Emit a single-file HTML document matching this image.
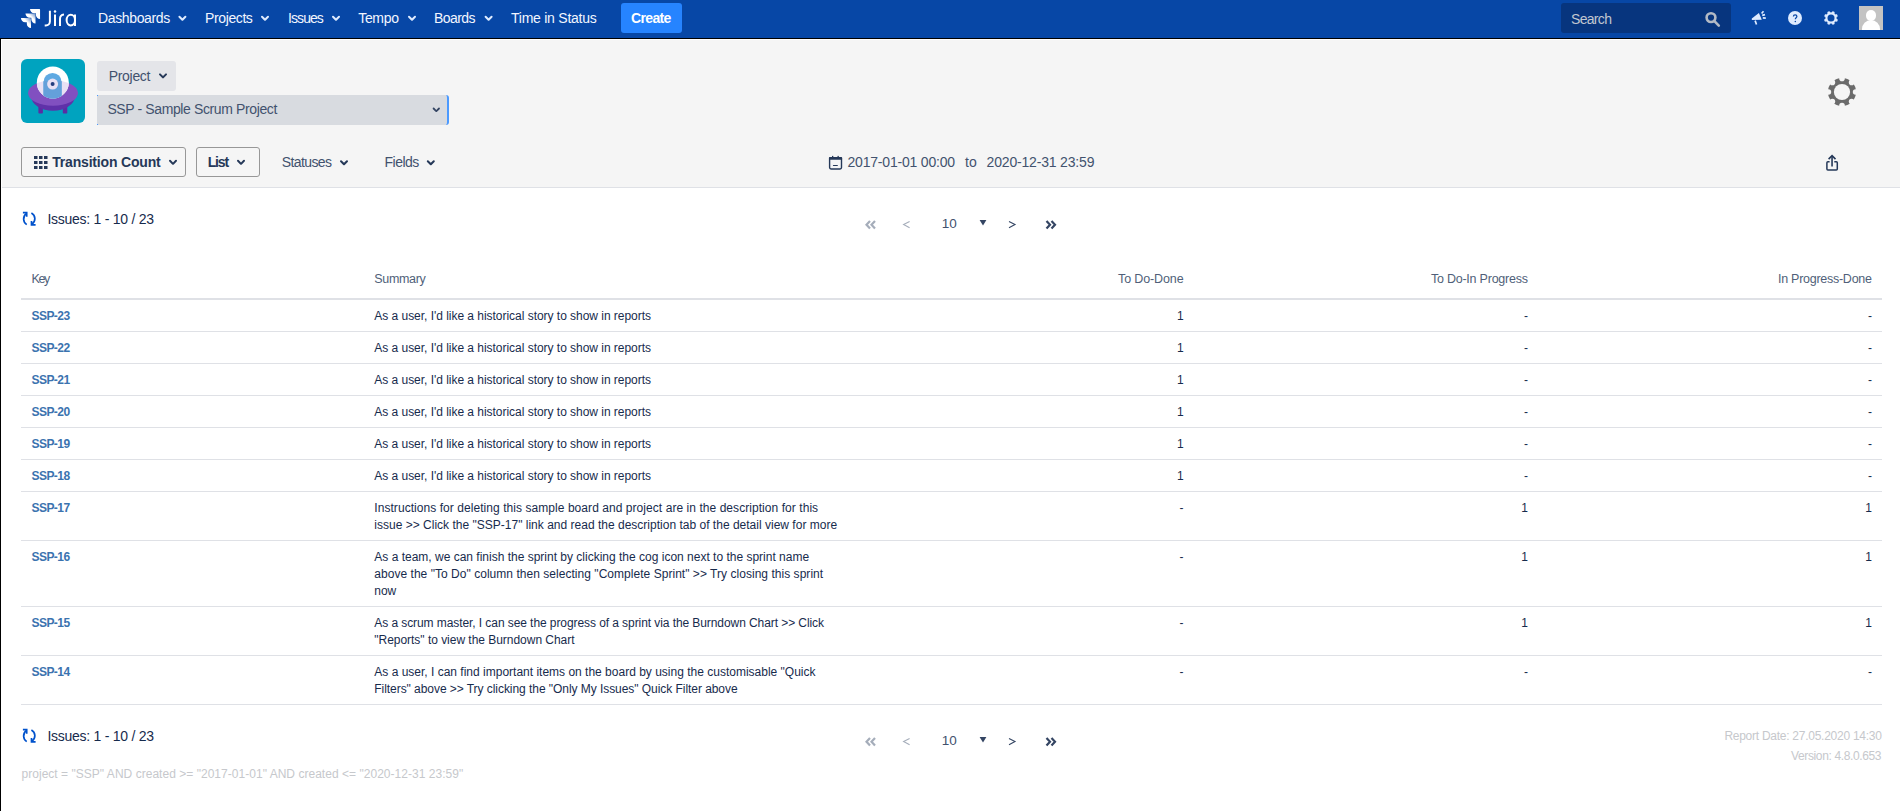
<!DOCTYPE html>
<html><head><meta charset="utf-8">
<style>
html,body{margin:0;padding:0;}
body{width:1900px;height:811px;overflow:hidden;position:relative;background:#fff;font-family:"Liberation Sans",sans-serif;}
.t{position:absolute;white-space:pre;line-height:1;}
.a{position:absolute;}
.hl{position:absolute;left:21px;width:1861px;height:1px;background:#dfe1e6;}
svg{position:absolute;overflow:visible;}
</style></head><body>
<!-- header -->
<div class="a" style="left:0;top:0;width:1900px;height:38px;background:#0747a6"></div>
<div class="a" style="left:0;top:38px;width:1900px;height:1px;background:#000"></div>
<div class="a" style="left:0;top:38px;width:1px;height:773px;background:#000"></div>
<div class="a" style="left:1px;top:39px;width:1899px;height:1px;background:#fff"></div>
<div class="a" style="left:1px;top:39px;width:1px;height:772px;background:#fff"></div>
<div class="a" style="left:2px;top:40px;width:1898px;height:147px;background:#f5f5f5"></div>
<div class="a" style="left:2px;top:187px;width:1898px;height:1px;background:#dfe1e6"></div>

<!-- jira logo -->
<svg style="left:0;top:0" width="90" height="38" viewBox="0 0 90 38">
 <defs>
  <linearGradient id="jg1" x1="1" y1="0" x2="0.3" y2="0.7"><stop offset="0" stop-color="#fff" stop-opacity="0.35"/><stop offset="0.55" stop-color="#fff" stop-opacity="1"/></linearGradient>
 </defs>
 <g transform="translate(17.8,6.6) scale(0.79)">
  <path fill="#fff" d="M27.006 3H15.45a5.3 5.3 0 0 0 5.3 5.3h2.128v2.054a5.3 5.3 0 0 0 5.3 5.3V3.972A.973.973 0 0 0 27.006 3z"/>
  <path fill="url(#jg1)" d="M21.28 8.767H9.726a5.3 5.3 0 0 0 5.3 5.3h2.128v2.054a5.3 5.3 0 0 0 5.3 5.3V9.739a.973.973 0 0 0-.973-.972z"/>
  <path fill="url(#jg1)" d="M15.557 14.534H4a5.3 5.3 0 0 0 5.3 5.3h2.128v2.054a5.3 5.3 0 0 0 5.3 5.3V15.506a.973.973 0 0 0-.973-.972z"/>
 </g>
 <g fill="none" stroke="#fff" stroke-width="2">
  <path d="M49.9 10.8V21.5a4 4 0 0 1-4 4H44.7"/>
  <path d="M55 14.5V26"/>
  <path d="M60 26V19a4.5 4.5 0 0 1 4-4.5"/>
  <path d="M75 14.5V26"/>
  <ellipse cx="70.8" cy="20.1" rx="4.2" ry="5.3"/>
 </g>
 <circle cx="55" cy="11.5" r="1.25" fill="#fff"/>
</svg>

<!-- nav chevrons -->
<svg style="left:0;top:0" width="700" height="38">
 <g fill="#deebff">
  <path transform="translate(170.4,5.7)" d="M8.292 10.293a1.009 1.009 0 0 0 0 1.419l2.939 2.965c.218.215.5.322.779.322s.556-.107.769-.322l2.93-2.955a1.01 1.01 0 0 0 0-1.419.987.987 0 0 0-1.406 0l-2.298 2.317-2.307-2.327a.99.99 0 0 0-1.406 0z"/>
  <path transform="translate(253,5.7)" d="M8.292 10.293a1.009 1.009 0 0 0 0 1.419l2.939 2.965c.218.215.5.322.779.322s.556-.107.769-.322l2.93-2.955a1.01 1.01 0 0 0 0-1.419.987.987 0 0 0-1.406 0l-2.298 2.317-2.307-2.327a.99.99 0 0 0-1.406 0z"/>
  <path transform="translate(324,5.7)" d="M8.292 10.293a1.009 1.009 0 0 0 0 1.419l2.939 2.965c.218.215.5.322.779.322s.556-.107.769-.322l2.93-2.955a1.01 1.01 0 0 0 0-1.419.987.987 0 0 0-1.406 0l-2.298 2.317-2.307-2.327a.99.99 0 0 0-1.406 0z"/>
  <path transform="translate(400,5.7)" d="M8.292 10.293a1.009 1.009 0 0 0 0 1.419l2.939 2.965c.218.215.5.322.779.322s.556-.107.769-.322l2.93-2.955a1.01 1.01 0 0 0 0-1.419.987.987 0 0 0-1.406 0l-2.298 2.317-2.307-2.327a.99.99 0 0 0-1.406 0z"/>
  <path transform="translate(476.6,5.7)" d="M8.292 10.293a1.009 1.009 0 0 0 0 1.419l2.939 2.965c.218.215.5.322.779.322s.556-.107.769-.322l2.93-2.955a1.01 1.01 0 0 0 0-1.419.987.987 0 0 0-1.406 0l-2.298 2.317-2.307-2.327a.99.99 0 0 0-1.406 0z"/>
 </g>
</svg>

<div class="a" style="left:621px;top:3px;width:61px;height:30px;background:#2684ff;border-radius:3px"></div>
<div class="a" style="left:1561px;top:3px;width:170px;height:30px;background:#07357e;border-radius:3px"></div>
<svg style="left:1700px;top:8px" width="24" height="24" viewBox="0 0 24 24">
 <circle cx="11" cy="9.6" r="4.4" fill="none" stroke="#b3bac5" stroke-width="2.6"/>
 <path d="M14.4 13.2l4.4 4.4" stroke="#b3bac5" stroke-width="2.6" stroke-linecap="round"/>
</svg>
<!-- megaphone -->
<svg style="left:1745px;top:6px" width="30" height="24" viewBox="0 0 30 24">
 <path fill="#deebff" d="M6.8 12.4L13.9 6.9L16.8 13.7L6.8 13.9z"/>
 <g stroke="#deebff" stroke-width="1.7" fill="none">
  <path d="M10.1 14.6L11.5 18.5"/>
  <path d="M16.6 7.5L18.5 5.3"/>
  <path d="M17.2 9.3L20 8.7"/>
  <path d="M17.8 11.9L20.8 12.1"/>
 </g>
</svg>
<!-- help -->
<svg style="left:1788px;top:10.8px" width="14" height="14" viewBox="0 0 14 14">
 <circle cx="7" cy="7" r="7" fill="#deebff"/>
 <path d="M5.4 5.5a1.75 1.75 0 0 1 3.5 0c0 1.2-1.6 1.3-1.6 2.7" fill="none" stroke="#0747a6" stroke-width="1.25"/>
 <circle cx="7.3" cy="10.4" r="0.75" fill="#0747a6"/>
</svg>
<!-- gear header -->
<svg style="left:1824px;top:10.8px" width="14" height="14" viewBox="0 0 14 14"><mask id="gmh"><rect width="14" height="14" fill="#fff"/><circle cx="7.00" cy="0.10" r="1.45" fill="#000"/><circle cx="11.88" cy="2.12" r="1.45" fill="#000"/><circle cx="13.90" cy="7.00" r="1.45" fill="#000"/><circle cx="11.88" cy="11.88" r="1.45" fill="#000"/><circle cx="7.00" cy="13.90" r="1.45" fill="#000"/><circle cx="2.12" cy="11.88" r="1.45" fill="#000"/><circle cx="0.10" cy="7.00" r="1.45" fill="#000"/><circle cx="2.12" cy="2.12" r="1.45" fill="#000"/><circle cx="7.0" cy="7.0" r="3.5" fill="#000"/></mask><circle cx="7.0" cy="7.0" r="7.1" fill="#deebff" mask="url(#gmh)"/></svg>
<!-- avatar -->
<div class="a" style="left:1859px;top:6px;width:24px;height:24px;background:#c3c3c3;overflow:hidden">
 <div class="a" style="left:6.8px;top:4.2px;width:10.4px;height:10.4px;border-radius:50%;background:#fff"></div>
 <div class="a" style="left:3px;top:14px;width:18px;height:16px;border-radius:9px 9px 0 0;background:#fff"></div>
</div>

<!-- project avatar -->
<svg style="left:21px;top:59px" width="64" height="64" viewBox="0 0 64 64">
 <defs>
  <clipPath id="domec"><circle cx="31.8" cy="23.5" r="16"/></clipPath>
  <clipPath id="sauc"><ellipse cx="32" cy="34" rx="25" ry="12.8"/></clipPath>
 </defs>
 <rect x="0" y="0" width="64" height="64" rx="6" fill="#00a3bf"/>
 <rect x="17.4" y="44" width="4.5" height="10.5" rx="0.8" fill="#5b2ca3"/>
 <rect x="41.8" y="44" width="4.5" height="10.5" rx="0.8" fill="#5b2ca3"/>
 <ellipse cx="32" cy="37.6" rx="21.8" ry="14.1" fill="#5f31a9"/>
 <ellipse cx="32" cy="34" rx="25" ry="12.8" fill="#8150c0"/>
 <circle cx="31.8" cy="23.5" r="16" fill="#fff"/>
 <g clip-path="url(#sauc)"><circle cx="31.8" cy="23.5" r="16" fill="#e9e1f4"/></g>
 <g clip-path="url(#domec)">
  <path d="M22.5 45V23a9.05 9.05 0 0 1 18.1 0V45z" fill="#5fa9e2"/>
  <g clip-path="url(#sauc)"><path d="M22.5 45V23a9.05 9.05 0 0 1 18.1 0V45z" fill="#64a0da"/></g>
 </g>
 <circle cx="31.6" cy="25.1" r="5.5" fill="#e9e1f4"/>
 <circle cx="31.6" cy="25.1" r="2" fill="#253e7e"/>
</svg>
<!-- project button & select -->
<div class="a" style="left:97px;top:61px;width:79px;height:30px;background:#e4e5e9;border-radius:3px"></div>
<div class="a" style="left:97px;top:95px;width:350px;height:30px;background:#d8dbe0"></div>
<div class="a" style="left:440px;top:95px;width:9px;height:30px;border-right:2px solid #4c9aff;border-radius:0 3px 3px 0;box-sizing:border-box"></div>
<div class="a" style="left:97px;top:95px;width:1px;height:1px;background:#4c9aff"></div>
<div class="a" style="left:97px;top:124px;width:1px;height:1px;background:#4c9aff"></div>

<svg style="left:0;top:40px" width="500" height="147">
 <g fill="#253858">
  <path transform="translate(151,23.4)" d="M8.292 10.293a1.009 1.009 0 0 0 0 1.419l2.939 2.965c.218.215.5.322.779.322s.556-.107.769-.322l2.93-2.955a1.01 1.01 0 0 0 0-1.419.987.987 0 0 0-1.406 0l-2.298 2.317-2.307-2.327a.99.99 0 0 0-1.406 0z"/>
  <path fill="#344563" transform="translate(425.5,58.6) scale(0.9)" d="M8.292 10.293a1.009 1.009 0 0 0 0 1.419l2.939 2.965c.218.215.5.322.779.322s.556-.107.769-.322l2.93-2.955a1.01 1.01 0 0 0 0-1.419.987.987 0 0 0-1.406 0l-2.298 2.317-2.307-2.327a.99.99 0 0 0-1.406 0z"/>
  <path transform="translate(161,109.8)" d="M8.292 10.293a1.009 1.009 0 0 0 0 1.419l2.939 2.965c.218.215.5.322.779.322s.556-.107.769-.322l2.93-2.955a1.01 1.01 0 0 0 0-1.419.987.987 0 0 0-1.406 0l-2.298 2.317-2.307-2.327a.99.99 0 0 0-1.406 0z"/>
  <path transform="translate(229,109.8)" d="M8.292 10.293a1.009 1.009 0 0 0 0 1.419l2.939 2.965c.218.215.5.322.779.322s.556-.107.769-.322l2.93-2.955a1.01 1.01 0 0 0 0-1.419.987.987 0 0 0-1.406 0l-2.298 2.317-2.307-2.327a.99.99 0 0 0-1.406 0z"/>
  <path transform="translate(332,110.2)" d="M8.292 10.293a1.009 1.009 0 0 0 0 1.419l2.939 2.965c.218.215.5.322.779.322s.556-.107.769-.322l2.93-2.955a1.01 1.01 0 0 0 0-1.419.987.987 0 0 0-1.406 0l-2.298 2.317-2.307-2.327a.99.99 0 0 0-1.406 0z"/>
  <path transform="translate(418.8,110.2)" d="M8.292 10.293a1.009 1.009 0 0 0 0 1.419l2.939 2.965c.218.215.5.322.779.322s.556-.107.769-.322l2.93-2.955a1.01 1.01 0 0 0 0-1.419.987.987 0 0 0-1.406 0l-2.298 2.317-2.307-2.327a.99.99 0 0 0-1.406 0z"/>
 </g>
</svg>

<!-- big gear -->
<svg style="left:1828px;top:78px" width="28" height="28" viewBox="0 0 28 28"><mask id="gmb"><rect width="28" height="28" fill="#fff"/><circle cx="14.00" cy="0.40" r="2.8" fill="#000"/><circle cx="23.62" cy="4.38" r="2.8" fill="#000"/><circle cx="27.60" cy="14.00" r="2.8" fill="#000"/><circle cx="23.62" cy="23.62" r="2.8" fill="#000"/><circle cx="14.00" cy="27.60" r="2.8" fill="#000"/><circle cx="4.38" cy="23.62" r="2.8" fill="#000"/><circle cx="0.40" cy="14.00" r="2.8" fill="#000"/><circle cx="4.38" cy="4.38" r="2.8" fill="#000"/><circle cx="14.0" cy="14.0" r="8.1" fill="#000"/></mask><circle cx="14.0" cy="14.0" r="14" fill="#6b6b6b" mask="url(#gmb)"/></svg>
<!-- toolbar buttons -->
<div class="a" style="left:21px;top:147px;width:165px;height:30px;border:1px solid #979797;border-radius:3px;box-sizing:border-box"></div>
<div class="a" style="left:196px;top:147px;width:64px;height:30px;border:1px solid #979797;border-radius:3px;box-sizing:border-box"></div>
<svg style="left:34px;top:156px" width="14" height="14" viewBox="0 0 14 14">
 <g fill="#253858">
  <rect x="0" y="0" width="3.5" height="3"/>
  <rect x="5" y="0" width="3.5" height="3"/>
  <rect x="10" y="0" width="3.5" height="3"/>
  <rect x="0" y="5" width="3.5" height="3"/>
  <rect x="5" y="5" width="3.5" height="3"/>
  <rect x="10" y="5" width="3.5" height="3"/>
  <rect x="0" y="10" width="3.5" height="3"/>
  <rect x="5" y="10" width="3.5" height="3"/>
  <rect x="10" y="10" width="3.5" height="3"/>
 </g>
</svg>
<!-- calendar -->
<svg style="left:824px;top:150px" width="24" height="24" viewBox="0 0 24 24">
 <rect x="5.6" y="7.7" width="11.9" height="11.3" rx="1.4" fill="none" stroke="#253858" stroke-width="1.4"/>
 <rect x="4.9" y="7" width="13.3" height="2.8" rx="1" fill="#253858"/>
 <rect x="8" y="5.9" width="1.3" height="1.6" fill="#253858"/>
 <rect x="13.5" y="5.9" width="1.3" height="1.6" fill="#253858"/>
 <rect x="8.9" y="14.9" width="5" height="1.1" rx="0.5" fill="#253858"/>
</svg>
<!-- share -->
<svg style="left:1820px;top:148px" width="24" height="28" viewBox="0 0 24 28">
 <path d="M9.6 13.8H7.9a1 1 0 0 0-1 1V21.1a1 1 0 0 0 1 1H16.3a1 1 0 0 0 1-1V14.8a1 1 0 0 0-1-1H14.3" fill="none" stroke="#253858" stroke-width="1.5"/>
 <path d="M12.05 18.6V8.3" stroke="#253858" stroke-width="1.6"/>
 <path d="M8.6 11.1L12.05 7.6 15.5 11.1" fill="none" stroke="#253858" stroke-width="1.6"/>
</svg>
<!-- refresh icons -->
<svg style="left:18px;top:206px" width="24" height="24" viewBox="0 0 24 24">
 <g fill="none" stroke="#0052cc" stroke-width="1.7">
  <path d="M8.2 7.6A6.8 6.8 0 0 0 8.7 18.6"/>
  <path d="M13.4 6.9A6.6 6.6 0 0 1 13.9 18.2"/>
  <path d="M4.9 6.6H8.7V10.8"/>
  <path d="M13.5 15V18.8H17.6"/>
 </g>
</svg>
<svg style="left:18px;top:723px" width="24" height="24" viewBox="0 0 24 24">
 <g fill="none" stroke="#0052cc" stroke-width="1.7">
  <path d="M8.2 7.6A6.8 6.8 0 0 0 8.7 18.6"/>
  <path d="M13.4 6.9A6.6 6.6 0 0 1 13.9 18.2"/>
  <path d="M4.9 6.6H8.7V10.8"/>
  <path d="M13.5 15V18.8H17.6"/>
 </g>
</svg>
<!-- pagination top -->
<svg style="left:860px;top:215px" width="200" height="20" viewBox="0 0 200 20">
 <g fill="none" stroke-width="1.6">
  <path d="M10 6L6.5 9.8 10 13.6M15 6L11.5 9.8 15 13.6" stroke="#a5adba" stroke-width="2.2"/>
  <path d="M49.6 6.4L43.6 9.6 49.6 12.8" stroke="#a5adba" stroke-width="1.1"/>
  <path d="M149 6.4L155 9.6 149 12.8" stroke="#344563" stroke-width="1.1"/>
  <path d="M186.5 6L190 9.8 186.5 13.6M191.5 6L195 9.8 191.5 13.6" stroke="#344563" stroke-width="2.2"/>
 </g>
 <path d="M119.6 5h6.8l-3.4 5.6z" fill="#344563"/>
</svg>
<svg style="left:860px;top:732px" width="200" height="20" viewBox="0 0 200 20">
 <g fill="none" stroke-width="1.6">
  <path d="M10 6L6.5 9.8 10 13.6M15 6L11.5 9.8 15 13.6" stroke="#a5adba" stroke-width="2.2"/>
  <path d="M49.6 6.4L43.6 9.6 49.6 12.8" stroke="#a5adba" stroke-width="1.1"/>
  <path d="M149 6.4L155 9.6 149 12.8" stroke="#344563" stroke-width="1.1"/>
  <path d="M186.5 6L190 9.8 186.5 13.6M191.5 6L195 9.8 191.5 13.6" stroke="#344563" stroke-width="2.2"/>
 </g>
 <path d="M119.6 5h6.8l-3.4 5.6z" fill="#344563"/>
</svg>

<!-- table -->
<div class="a" style="left:21px;top:298px;width:1861px;height:2px;background:#dfe1e6"></div>
<div class="hl" style="top:331px"></div>
<div class="hl" style="top:363px"></div>
<div class="hl" style="top:395px"></div>
<div class="hl" style="top:427px"></div>
<div class="hl" style="top:459px"></div>
<div class="hl" style="top:491px"></div>
<div class="hl" style="top:540px"></div>
<div class="hl" style="top:606px"></div>
<div class="hl" style="top:655px"></div>
<div class="hl" style="top:704px"></div>

<div class="t" style="left:98.00px;top:10.75px;font-size:14px;color:#f2f6ff;letter-spacing:-0.356px;">Dashboards</div>
<div class="t" style="left:205.10px;top:10.75px;font-size:14px;color:#f2f6ff;letter-spacing:-0.400px;">Projects</div>
<div class="t" style="left:288.00px;top:10.75px;font-size:14px;color:#f2f6ff;letter-spacing:-0.920px;">Issues</div>
<div class="t" style="left:358.20px;top:10.75px;font-size:14px;color:#f2f6ff;letter-spacing:-0.300px;">Tempo</div>
<div class="t" style="left:434.00px;top:10.75px;font-size:14px;color:#f2f6ff;letter-spacing:-0.560px;">Boards</div>
<div class="t" style="left:511.00px;top:10.75px;font-size:14px;color:#f2f6ff;letter-spacing:-0.246px;">Time in Status</div>
<div class="t" style="left:631.00px;top:10.75px;font-size:14px;color:#ffffff;font-weight:bold;letter-spacing:-0.640px;">Create</div>
<div class="t" style="left:1571.00px;top:11.65px;font-size:14px;color:#c1c7d0;letter-spacing:-0.680px;">Search</div>
<div class="t" style="left:108.70px;top:68.95px;font-size:14px;color:#42526e;letter-spacing:-0.300px;">Project</div>
<div class="t" style="left:107.40px;top:102.15px;font-size:14px;color:#42526e;letter-spacing:-0.380px;">SSP - Sample Scrum Project</div>
<div class="t" style="left:52.20px;top:155.25px;font-size:14px;color:#253858;font-weight:bold;letter-spacing:-0.180px;">Transition Count</div>
<div class="t" style="left:207.70px;top:155.25px;font-size:14px;color:#253858;font-weight:bold;letter-spacing:-1.167px;">List</div>
<div class="t" style="left:281.80px;top:155.15px;font-size:14px;color:#42526e;letter-spacing:-0.614px;">Statuses</div>
<div class="t" style="left:384.60px;top:155.15px;font-size:14px;color:#42526e;letter-spacing:-0.540px;">Fields</div>
<div class="t" style="left:847.50px;top:155.15px;font-size:14px;color:#42526e;letter-spacing:-0.200px;">2017-01-01 00:00</div>
<div class="t" style="left:965.00px;top:155.15px;font-size:14px;color:#42526e;letter-spacing:0.100px;">to</div>
<div class="t" style="left:986.60px;top:155.15px;font-size:14px;color:#42526e;letter-spacing:-0.180px;">2020-12-31 23:59</div>
<div class="t" style="left:47.40px;top:211.55px;font-size:14px;color:#172b4d;letter-spacing:-0.261px;">Issues: 1 - 10 / 23</div>
<div class="t" style="left:941.70px;top:217.37px;font-size:13.5px;color:#42526e;">10</div>
<div class="t" style="left:31.50px;top:273.22px;font-size:12.5px;color:#505f79;letter-spacing:-1.350px;">Key</div>
<div class="t" style="left:374.20px;top:273.22px;font-size:12.5px;color:#505f79;letter-spacing:-0.300px;">Summary</div>
<div class="t" style="left:1118.00px;top:273.22px;font-size:12.5px;color:#505f79;letter-spacing:-0.122px;">To Do-Done</div>
<div class="t" style="left:1430.90px;top:273.22px;font-size:12.5px;color:#505f79;letter-spacing:-0.225px;">To Do-In Progress</div>
<div class="t" style="left:1778.00px;top:273.22px;font-size:12.5px;color:#505f79;letter-spacing:-0.267px;">In Progress-Done</div>
<div class="t" style="left:31.50px;top:309.64px;font-size:12px;color:#3b73af;font-weight:bold;letter-spacing:-0.560px;">SSP-23</div>
<div class="t" style="left:374.30px;top:309.64px;font-size:12px;color:#172b4d;letter-spacing:-0.030px;">As a user, I&#x27;d like a historical story to show in reports</div>
<div class="t" style="left:1176.90px;top:309.64px;font-size:12px;color:#172b4d;">1</div>
<div class="t" style="left:1524.00px;top:309.64px;font-size:12px;color:#172b4d;">-</div>
<div class="t" style="left:1868.00px;top:309.64px;font-size:12px;color:#172b4d;">-</div>
<div class="t" style="left:31.50px;top:341.64px;font-size:12px;color:#3b73af;font-weight:bold;letter-spacing:-0.560px;">SSP-22</div>
<div class="t" style="left:374.30px;top:341.64px;font-size:12px;color:#172b4d;letter-spacing:-0.030px;">As a user, I&#x27;d like a historical story to show in reports</div>
<div class="t" style="left:1176.90px;top:341.64px;font-size:12px;color:#172b4d;">1</div>
<div class="t" style="left:1524.00px;top:341.64px;font-size:12px;color:#172b4d;">-</div>
<div class="t" style="left:1868.00px;top:341.64px;font-size:12px;color:#172b4d;">-</div>
<div class="t" style="left:31.50px;top:373.64px;font-size:12px;color:#3b73af;font-weight:bold;letter-spacing:-0.560px;">SSP-21</div>
<div class="t" style="left:374.30px;top:373.64px;font-size:12px;color:#172b4d;letter-spacing:-0.030px;">As a user, I&#x27;d like a historical story to show in reports</div>
<div class="t" style="left:1176.90px;top:373.64px;font-size:12px;color:#172b4d;">1</div>
<div class="t" style="left:1524.00px;top:373.64px;font-size:12px;color:#172b4d;">-</div>
<div class="t" style="left:1868.00px;top:373.64px;font-size:12px;color:#172b4d;">-</div>
<div class="t" style="left:31.50px;top:405.64px;font-size:12px;color:#3b73af;font-weight:bold;letter-spacing:-0.560px;">SSP-20</div>
<div class="t" style="left:374.30px;top:405.64px;font-size:12px;color:#172b4d;letter-spacing:-0.030px;">As a user, I&#x27;d like a historical story to show in reports</div>
<div class="t" style="left:1176.90px;top:405.64px;font-size:12px;color:#172b4d;">1</div>
<div class="t" style="left:1524.00px;top:405.64px;font-size:12px;color:#172b4d;">-</div>
<div class="t" style="left:1868.00px;top:405.64px;font-size:12px;color:#172b4d;">-</div>
<div class="t" style="left:31.50px;top:437.64px;font-size:12px;color:#3b73af;font-weight:bold;letter-spacing:-0.560px;">SSP-19</div>
<div class="t" style="left:374.30px;top:437.64px;font-size:12px;color:#172b4d;letter-spacing:-0.030px;">As a user, I&#x27;d like a historical story to show in reports</div>
<div class="t" style="left:1176.90px;top:437.64px;font-size:12px;color:#172b4d;">1</div>
<div class="t" style="left:1524.00px;top:437.64px;font-size:12px;color:#172b4d;">-</div>
<div class="t" style="left:1868.00px;top:437.64px;font-size:12px;color:#172b4d;">-</div>
<div class="t" style="left:31.50px;top:469.64px;font-size:12px;color:#3b73af;font-weight:bold;letter-spacing:-0.560px;">SSP-18</div>
<div class="t" style="left:374.30px;top:469.64px;font-size:12px;color:#172b4d;letter-spacing:-0.030px;">As a user, I&#x27;d like a historical story to show in reports</div>
<div class="t" style="left:1176.90px;top:469.64px;font-size:12px;color:#172b4d;">1</div>
<div class="t" style="left:1524.00px;top:469.64px;font-size:12px;color:#172b4d;">-</div>
<div class="t" style="left:1868.00px;top:469.64px;font-size:12px;color:#172b4d;">-</div>
<div class="t" style="left:31.50px;top:501.64px;font-size:12px;color:#3b73af;font-weight:bold;letter-spacing:-0.560px;">SSP-17</div>
<div class="t" style="left:374.30px;top:501.64px;font-size:12px;color:#172b4d;letter-spacing:0.057px;">Instructions for deleting this sample board and project are in the description for this</div>
<div class="t" style="left:374.30px;top:518.64px;font-size:12px;color:#172b4d;letter-spacing:0.008px;">issue &gt;&gt; Click the &quot;SSP-17&quot; link and read the description tab of the detail view for more</div>
<div class="t" style="left:1179.60px;top:501.64px;font-size:12px;color:#172b4d;">-</div>
<div class="t" style="left:1521.30px;top:501.64px;font-size:12px;color:#172b4d;">1</div>
<div class="t" style="left:1865.30px;top:501.64px;font-size:12px;color:#172b4d;">1</div>
<div class="t" style="left:31.50px;top:550.64px;font-size:12px;color:#3b73af;font-weight:bold;letter-spacing:-0.560px;">SSP-16</div>
<div class="t" style="left:374.30px;top:550.64px;font-size:12px;color:#172b4d;letter-spacing:-0.001px;">As a team, we can finish the sprint by clicking the cog icon next to the sprint name</div>
<div class="t" style="left:374.30px;top:567.64px;font-size:12px;color:#172b4d;letter-spacing:0.035px;">above the &quot;To Do&quot; column then selecting &quot;Complete Sprint&quot; &gt;&gt; Try closing this sprint</div>
<div class="t" style="left:374.30px;top:584.64px;font-size:12px;color:#172b4d;letter-spacing:-0.030px;">now</div>
<div class="t" style="left:1179.60px;top:550.64px;font-size:12px;color:#172b4d;">-</div>
<div class="t" style="left:1521.30px;top:550.64px;font-size:12px;color:#172b4d;">1</div>
<div class="t" style="left:1865.30px;top:550.64px;font-size:12px;color:#172b4d;">1</div>
<div class="t" style="left:31.50px;top:616.64px;font-size:12px;color:#3b73af;font-weight:bold;letter-spacing:-0.560px;">SSP-15</div>
<div class="t" style="left:374.30px;top:616.64px;font-size:12px;color:#172b4d;letter-spacing:-0.077px;">As a scrum master, I can see the progress of a sprint via the Burndown Chart &gt;&gt; Click</div>
<div class="t" style="left:374.30px;top:633.64px;font-size:12px;color:#172b4d;letter-spacing:-0.029px;">&quot;Reports&quot; to view the Burndown Chart</div>
<div class="t" style="left:1179.60px;top:616.64px;font-size:12px;color:#172b4d;">-</div>
<div class="t" style="left:1521.30px;top:616.64px;font-size:12px;color:#172b4d;">1</div>
<div class="t" style="left:1865.30px;top:616.64px;font-size:12px;color:#172b4d;">1</div>
<div class="t" style="left:31.50px;top:665.64px;font-size:12px;color:#3b73af;font-weight:bold;letter-spacing:-0.560px;">SSP-14</div>
<div class="t" style="left:374.30px;top:665.64px;font-size:12px;color:#172b4d;letter-spacing:0.001px;">As a user, I can find important items on the board by using the customisable &quot;Quick</div>
<div class="t" style="left:374.30px;top:682.64px;font-size:12px;color:#172b4d;letter-spacing:-0.052px;">Filters&quot; above &gt;&gt; Try clicking the &quot;Only My Issues&quot; Quick Filter above</div>
<div class="t" style="left:1179.60px;top:665.64px;font-size:12px;color:#172b4d;">-</div>
<div class="t" style="left:1524.00px;top:665.64px;font-size:12px;color:#172b4d;">-</div>
<div class="t" style="left:1868.00px;top:665.64px;font-size:12px;color:#172b4d;">-</div>
<div class="t" style="left:47.40px;top:728.55px;font-size:14px;color:#172b4d;letter-spacing:-0.261px;">Issues: 1 - 10 / 23</div>
<div class="t" style="left:941.70px;top:734.37px;font-size:13.5px;color:#42526e;">10</div>
<div class="t" style="left:1724.40px;top:730.14px;font-size:12px;color:#c6c8cc;letter-spacing:-0.261px;">Report Date: 27.05.2020 14:30</div>
<div class="t" style="left:1791.00px;top:749.84px;font-size:12px;color:#c6c8cc;letter-spacing:-0.365px;">Version: 4.8.0.653</div>
<div class="t" style="left:21.50px;top:767.84px;font-size:12px;color:#c6c8cc;letter-spacing:0.029px;">project = &quot;SSP&quot; AND created &gt;= &quot;2017-01-01&quot; AND created &lt;= &quot;2020-12-31 23:59&quot;</div>

</body></html>
